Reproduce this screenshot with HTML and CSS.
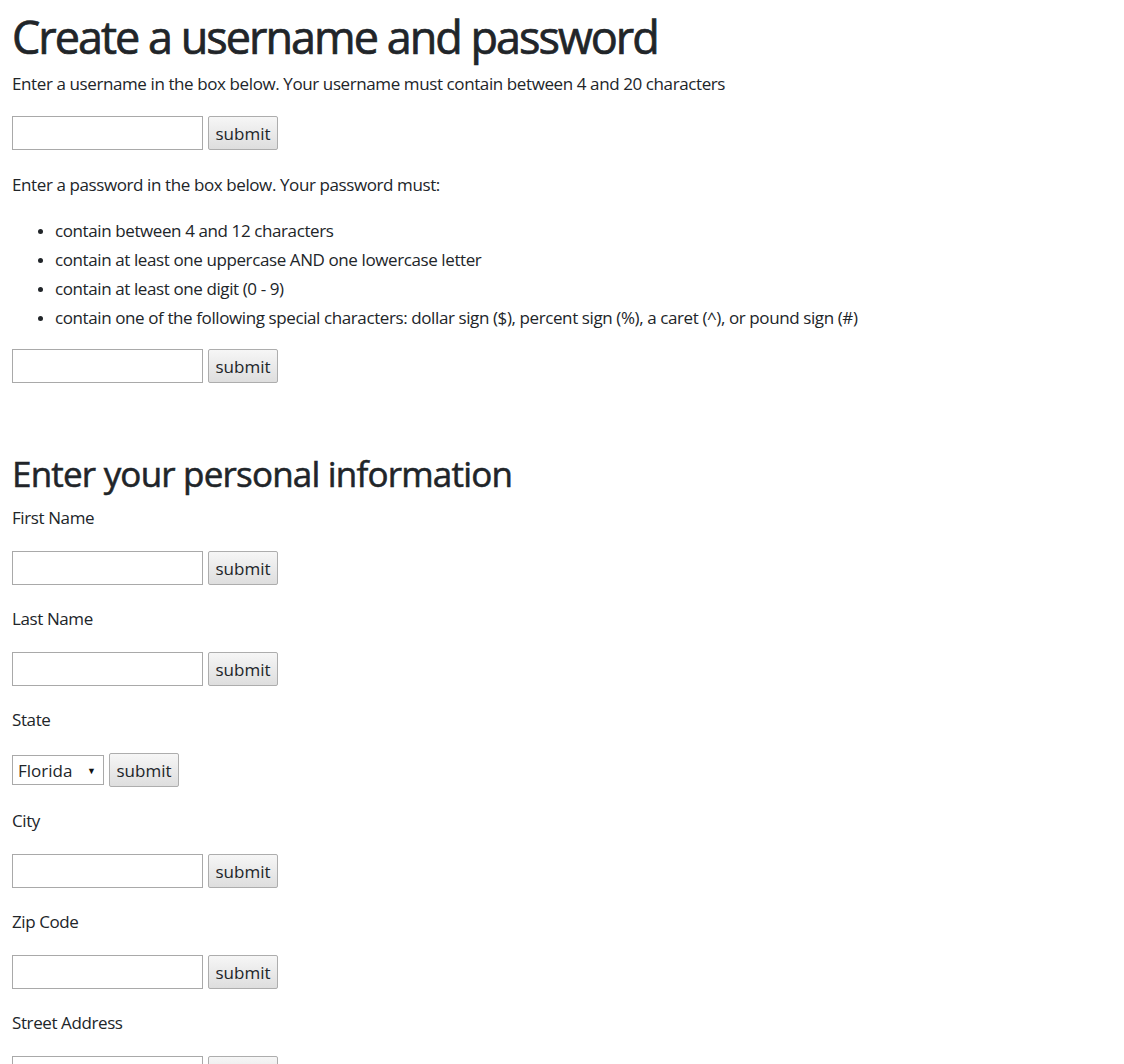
FILE: index.html
```html
<!DOCTYPE html>
<html lang="en">
<head>
<meta charset="utf-8">
<title>Create a username and password</title>
<link rel="stylesheet" href="styles.css">
</head>
<body>
<main class="page">
  <h1 class="title">Create a username and password</h1>
  <p class="text">Enter a username in the box below. Your username must contain between 4 and 20 characters</p>
  <div class="row row-first">
    <input class="field" type="text">
    <button class="btn" type="button">submit</button>
  </div>
  <p class="text text-second">Enter a password in the box below. Your password must:</p>
  <ul class="rules">
    <li>contain between 4 and 12 characters</li>
    <li>contain at least one uppercase AND one lowercase letter</li>
    <li>contain at least one digit (0 - 9)</li>
    <li>contain one of the following special characters: dollar sign ($), percent sign (%), a caret (^), or pound sign (#)</li>
  </ul>
  <div class="row">
    <input class="field" type="password">
    <button class="btn" type="button">submit</button>
  </div>

  <h2 class="section">Enter your personal information</h2>
  <div class="group">
    <label class="label">First Name</label>
    <div class="row"><input class="field" type="text"><button class="btn" type="button">submit</button></div>
  </div>
  <div class="group">
    <label class="label">Last Name</label>
    <div class="row"><input class="field" type="text"><button class="btn" type="button">submit</button></div>
  </div>
  <div class="group">
    <label class="label">State</label>
    <div class="row row-select">
      <div class="select"><span>Florida</span><span class="arrow">&#9660;</span></div>
      <button class="btn" type="button">submit</button>
    </div>
  </div>
  <div class="group">
    <label class="label">City</label>
    <div class="row"><input class="field" type="text"><button class="btn" type="button">submit</button></div>
  </div>
  <div class="group">
    <label class="label">Zip Code</label>
    <div class="row"><input class="field" type="text"><button class="btn" type="button">submit</button></div>
  </div>
  <div class="group">
    <label class="label">Street Address</label>
    <div class="row"><input class="field" type="text"><button class="btn" type="button">submit</button></div>
  </div>
</main>
</body>
</html>
```
FILE: styles.css
```css
html, body {
  margin: 0;
  padding: 0;
  background: #ffffff;
}
body {
  font-family: "Open Sans", "Noto Sans", sans-serif;
  font-size: 17px;
  line-height: 29px;
  letter-spacing: -0.4px;
  color: #212529;
}
.page {
  padding: 8px 12px 0 12px;
}
.title {
  margin: 0;
  font-size: 45px;
  line-height: 58px;
  font-weight: 400;
  letter-spacing: -2px;
  -webkit-text-stroke: 0.7px #212529;
}
.text {
  margin: 3px 0 0 0;
}
.row {
  display: flex;
  align-items: center;
  gap: 5px;
  height: 34px;
}
.row-first {
  margin-top: 18px;
}
.text-second {
  margin-top: 20px;
}
.rules {
  margin: 17px 0 17px 0;
  padding-left: 43px;
}
.rules li::marker {
  font-size: 14px;
}
.field {
  box-sizing: border-box;
  width: 191px;
  height: 34px;
  margin: 0;
  border: 1px solid #a9a9a9;
  background: #fff;
  font: inherit;
  padding: 0 4px;
}
.btn {
  box-sizing: border-box;
  width: 70px;
  height: 34px;
  margin: 0;
  padding: 0;
  border: 1px solid #adadad;
  border-radius: 2px;
  background: linear-gradient(#f6f6f6, #dedede);
  font: inherit;
  letter-spacing: 0;
  color: #212529;
}
.section {
  margin: 71px 0 0 0;
  font-size: 35px;
  line-height: 40px;
  font-weight: 400;
  letter-spacing: -0.8px;
  -webkit-text-stroke: 0.55px #212529;
}
.group {
  margin-top: 9px;
}
.group + .group {
  margin-top: 19px;
}
.label {
  display: block;
  margin-bottom: 19px;
}
.select {
  box-sizing: border-box;
  width: 92px;
  height: 30px;
  border: 1px solid #a9a9a9;
  display: flex;
  align-items: center;
  justify-content: space-between;
  padding: 0 7px 0 5px;
  background: #fff;
  letter-spacing: 0;
}
.arrow {
  font-size: 9px;
  line-height: 9px;
  color: #111;
}
```
